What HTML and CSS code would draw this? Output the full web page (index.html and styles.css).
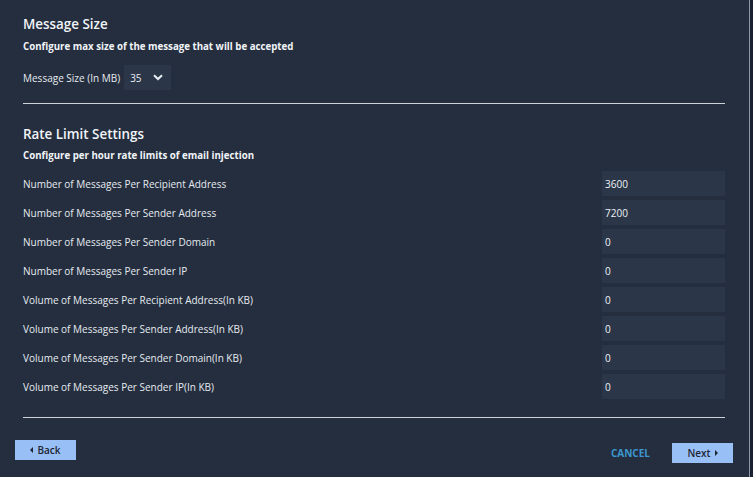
FILE: index.html
```html
<!DOCTYPE html>
<html>
<head>
<meta charset="utf-8">
<link rel="stylesheet" href="styles.css">
</head>
<body>
<div class="page">
  <div class="content">
    <section class="section">
      <h2 class="title">Message Size</h2>
      <p class="desc">Configure max size of the message that will be accepted</p>
      <div class="size-row">
        <span class="label">Message Size (In MB)</span>
        <div class="select">
          <span>35</span>
          <svg width="10" height="7" viewBox="0 0 10 7"><path d="M1 1.2 L5 5 L9 1.2" fill="none" stroke="#e8edf3" stroke-width="2"/></svg>
        </div>
      </div>
    </section>
    <hr class="rule first">
    <section class="section">
      <h2 class="title">Rate Limit Settings</h2>
      <p class="desc">Configure per hour rate limits of email injection</p>
      <div class="rows">
        <div class="row"><span class="label">Number of Messages Per Recipient Address</span><div class="input">3600</div></div>
        <div class="row"><span class="label">Number of Messages Per Sender Address</span><div class="input">7200</div></div>
        <div class="row"><span class="label">Number of Messages Per Sender Domain</span><div class="input">0</div></div>
        <div class="row"><span class="label">Number of Messages Per Sender IP</span><div class="input">0</div></div>
        <div class="row"><span class="label">Volume of Messages Per Recipient Address(In KB)</span><div class="input">0</div></div>
        <div class="row"><span class="label">Volume of Messages Per Sender Address(In KB)</span><div class="input">0</div></div>
        <div class="row"><span class="label">Volume of Messages Per Sender Domain(In KB)</span><div class="input">0</div></div>
        <div class="row"><span class="label">Volume of Messages Per Sender IP(In KB)</span><div class="input">0</div></div>
      </div>
    </section>
    <hr class="rule second">
  </div>
  <div class="footer">
    <button class="btn back"><span class="tri-left"></span>Back</button>
    <div class="right-actions">
      <button class="cancel">CANCEL</button>
      <button class="btn next">Next<span class="tri-right"></span></button>
    </div>
  </div>
</div>
</body>
</html>
```
FILE: styles.css
```css
html, body {
  margin: 0;
  padding: 0;
}
body {
  background: #1a2130;
  font-family: "Open Sans", "Noto Sans", sans-serif;
  color: #e9eef4;
  width: 753px;
  height: 477px;
  overflow: hidden;
}
.page {
  width: 749px;
  height: 477px;
  background: #242e3e;
  border-right: 1px solid #8e97a4;
  box-sizing: content-box;
}
.content {
  padding: 14px 24px 0 23px;
}
.title {
  margin: 0;
  font-size: 13.4px;
  font-weight: 600;
  line-height: 20px;
  color: #f1f4f8;
}
.desc {
  margin: 6px 0 0;
  font-size: 9.7px;
  font-weight: 700;
  line-height: 14px;
  color: #f1f4f8;
}
.label {
  font-size: 10px;
  line-height: 14px;
  color: #e6ebf1;
}
.size-row {
  display: flex;
  align-items: center;
  gap: 4px;
  margin-top: 11px;
}
.select {
  width: 47px;
  height: 25px;
  background: #2b3749;
  display: flex;
  align-items: center;
  justify-content: space-between;
  padding: 0 8px 0 6px;
  box-sizing: border-box;
  font-size: 10px;
}
.rule {
  border: 0;
  border-top: 1px solid #cdd2d9;
  margin: 0;
}
.rule.first {
  margin-top: 13px;
  margin-bottom: 20px;
}
.rule.first + .section .desc {
  margin-top: 5px;
}
.rule.second {
  margin-top: 18px;
}
.rows {
  margin-top: 8px;
  display: flex;
  flex-direction: column;
  gap: 4px;
}
.row {
  display: flex;
  justify-content: space-between;
  align-items: center;
  height: 25px;
}
.input {
  width: 123px;
  height: 25px;
  background: #2b3749;
  box-sizing: border-box;
  padding: 0 3px;
  display: flex;
  align-items: center;
  font-size: 10px;
  color: #eef2f6;
}
.footer {
  display: flex;
  justify-content: space-between;
  align-items: flex-start;
  padding: 22px 16px 0 15px;
}
.right-actions {
  display: flex;
  align-items: center;
  gap: 22px;
  margin-top: 3px;
}
.btn {
  border: 0;
  background: #99c0f6;
  color: #1d2533;
  font-family: "Open Sans", "Noto Sans", sans-serif;
  font-size: 10px;
  font-weight: 600;
  height: 20px;
  width: 61px;
  display: flex;
  align-items: center;
  justify-content: center;
  gap: 4px;
  padding: 0;
}
.tri-left {
  width: 0;
  height: 0;
  border-top: 3px solid transparent;
  border-bottom: 3px solid transparent;
  border-right: 3px solid #1d2533;
}
.tri-right {
  width: 0;
  height: 0;
  border-top: 3px solid transparent;
  border-bottom: 3px solid transparent;
  border-left: 3px solid #1d2533;
}
.cancel {
  border: 0;
  background: transparent;
  color: #3c97cf;
  font-family: "Open Sans", "Noto Sans", sans-serif;
  font-size: 10px;
  font-weight: 700;
  padding: 0;
}
```
